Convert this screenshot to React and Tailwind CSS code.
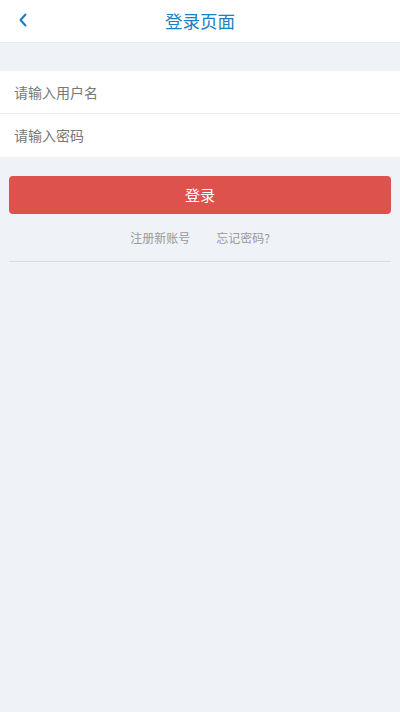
import React, { useState } from "react";

export default function App() {
  const [username, setUsername] = useState("");
  const [password, setPassword] = useState("");

  return (
    <div
      className="min-h-[712px] w-full bg-[#eff3f8] text-[#333]"
      style={{ fontFamily: '"Noto Sans CJK SC", "Noto Sans", sans-serif' }}
    >
      {/* Header */}
      <div className="relative flex h-[43px] items-center justify-center border-b border-[#e5e9ee] bg-white">
        <button className="absolute left-[15px] top-[10px] flex h-[20px] w-[16px] items-center justify-center text-[#1a7cc2]">
          <svg width="10" height="14" viewBox="0 0 10 14" fill="none">
            <path
              d="M7.5 1.5L2.5 7l5 5.5"
              stroke="currentColor"
              strokeWidth="2"
              strokeLinecap="round"
              strokeLinejoin="round"
            />
          </svg>
        </button>
        <h1 className="text-[17.5px] leading-none text-[#1a7fc4]">登录页面</h1>
      </div>

      {/* Inputs */}
      <div className="mt-[28px] bg-white">
        <div className="flex h-[43px] items-center border-b border-[#e8ebef] px-[14px]">
          <input
            type="text"
            className="w-full bg-transparent text-[14px] text-[#333] outline-none placeholder:text-[#777]"
            placeholder="请输入用户名"
            value={username}
            onChange={(e) => setUsername(e.target.value)}
          />
        </div>
        <div className="flex h-[43px] items-center px-[14px]">
          <input
            type="password"
            className="w-full bg-transparent text-[14px] text-[#333] outline-none placeholder:text-[#777]"
            placeholder="请输入密码"
            value={password}
            onChange={(e) => setPassword(e.target.value)}
          />
        </div>
      </div>

      {/* Actions */}
      <div className="px-[9px] pt-[19px]">
        <button className="flex h-[38px] w-full items-center justify-center rounded-[4px] bg-[#dd524d] text-[15px] text-white">
          登录
        </button>
        <div className="mt-[15px] flex justify-center gap-[26px] text-[12px] text-[#999]">
          <span>注册新账号</span>
          <span>忘记密码?</span>
        </div>
        <div className="mt-[14px] border-b border-[#d8dce1]" />
      </div>
    </div>
  );
}
